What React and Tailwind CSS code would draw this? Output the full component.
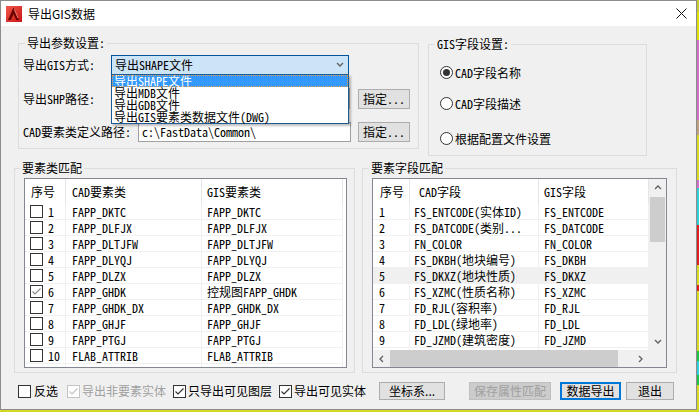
import React from "react";

const SONG = "font-['Noto_Sans_Mono_CJK_SC','Liberation_Mono','Noto_Sans_CJK_SC',monospace]";
const HEI = "font-['Noto_Sans_CJK_SC','Liberation_Sans',sans-serif]";

function Check({ checked, disabled, gray }) {
  const stroke = disabled ? "#c4c4c4" : gray ? "#8c8c8c" : "#333333";
  return (
    <span
      className={`w-[13px] h-[13px] border bg-white flex items-center justify-center shrink-0 ${
        disabled ? "border-[#c4c4c4]" : "border-[#333333]"
      }`}
    >
      {checked && (
        <svg width="11" height="11" viewBox="0 0 11 11">
          <path d="M1.5 5.5 L4 8 L9.5 2.5" fill="none" stroke={stroke} strokeWidth="1.2" />
        </svg>
      )}
    </span>
  );
}

function Radio({ checked, label }) {
  return (
    <div className="flex items-center h-[13px]">
      <span className="w-[13px] h-[13px] rounded-full border border-[#333333] bg-white flex items-center justify-center shrink-0">
        {checked && <span className="w-[7px] h-[7px] rounded-full bg-[#333333]" />}
      </span>
      <span className={`${SONG} ml-[2px] text-[12px] leading-[12px] text-black whitespace-nowrap`}>{label}</span>
    </div>
  );
}

function Btn({ children, className = "" }) {
  return (
    <div
      className={`h-[20px] border border-[#adadad] bg-[#e1e1e1] flex items-center justify-center text-[12px] leading-[12px] text-black shrink-0 ${className}`}
    >
      {children}
    </div>
  );
}

function Chevron({ dir }) {
  const d =
    dir === "up"
      ? "M1 5 L4 2 L7 5"
      : dir === "down"
      ? "M1 2 L4 5 L7 2"
      : dir === "left"
      ? "M5 1 L2 4 L5 7"
      : "M2 1 L5 4 L2 7";
  return (
    <svg width="8" height="8" viewBox="0 0 8 8">
      <path d={d} fill="none" stroke="#606060" strokeWidth="1.3" />
    </svg>
  );
}

const leftRows = [
  ["1", "FAPP_DKTC", "FAPP_DKTC"],
  ["2", "FAPP_DLFJX", "FAPP_DLFJX"],
  ["3", "FAPP_DLTJFW", "FAPP_DLTJFW"],
  ["4", "FAPP_DLYQJ", "FAPP_DLYQJ"],
  ["5", "FAPP_DLZX", "FAPP_DLZX"],
  ["6", "FAPP_GHDK", "控规图FAPP_GHDK", true],
  ["7", "FAPP_GHDK_DX", "FAPP_GHDK_DX"],
  ["8", "FAPP_GHJF", "FAPP_GHJF"],
  ["9", "FAPP_PTGJ", "FAPP_PTGJ"],
  ["10", "FLAB_ATTRIB", "FLAB_ATTRIB"],
  ["", "", ""],
];

const rightRows = [
  ["1", "FS_ENTCODE(实体ID)", "FS_ENTCODE"],
  ["2", "FS_DATCODE(类别...", "FS_DATCODE"],
  ["3", "FN_COLOR", "FN_COLOR"],
  ["4", "FS_DKBH(地块编号)", "FS_DKBH"],
  ["5", "FS_DKXZ(地块性质)", "FS_DKXZ", true],
  ["6", "FS_XZMC(性质名称)", "FS_XZMC"],
  ["7", "FD_RJL(容积率)", "FD_RJL"],
  ["8", "FD_LDL(绿地率)", "FD_LDL"],
  ["9", "FD_JZMD(建筑密度)", "FD_JZMD"],
  ["", "", ""],
];

const strip = [
  ["#c8c830", 12],
  ["#e0e000", 28],
  ["#d070c8", 80],
  ["#c0a080", 15],
  ["#d8d820", 45],
  ["#d070c8", 8],
  ["#30d0d8", 37],
  ["#e02020", 40],
  ["#d8d820", 20],
  ["#e02020", 6],
  ["#d8d820", 60],
  ["#20c040", 10],
  ["#30d0d8", 14],
  ["#20c040", 10],
  ["#d8d820", 27],
];

export default function App() {
  return (
    <div className="w-[699px] h-[412px] overflow-hidden bg-[#d8d820] flex flex-col">
      <div className="flex">
        {/* window */}
        <div className="w-[697px] h-[410px] border border-[#8c8c8c] bg-[#f0f0f0] flex flex-col shrink-0">
          {/* title bar */}
          <div className="h-[25px] bg-white flex items-center shrink-0">
            <svg className="ml-[5px]" width="16" height="16" viewBox="0 0 16 16">
              <defs>
                <linearGradient id="acad" x1="0" y1="0" x2="1" y2="1">
                  <stop offset="0" stopColor="#f25a4a" />
                  <stop offset="1" stopColor="#c81414" />
                </linearGradient>
              </defs>
              <rect width="16" height="16" fill="url(#acad)" />
              <path d="M7.5 1.5 L13 14 L10.2 14 L7.5 8 L4.8 14 L2 14 Z" fill="#6e0000" />
              <path d="M8.3 3.5 L12 12" stroke="#ff9a8a" strokeWidth="0.8" />
            </svg>
            <span className={`${HEI} ml-[6px] text-[12px] leading-[14px] text-black`}>导出GIS数据</span>
            <div className="flex-1" />
            <svg className="mr-[9px]" width="11" height="11" viewBox="0 0 11 11">
              <path d="M0.5 0.5 L10.5 10.5 M10.5 0.5 L0.5 10.5" stroke="#111" strokeWidth="1" />
            </svg>
          </div>

          {/* top section */}
          <div className="flex items-start mt-[11px]">
            <fieldset className="ml-[17px] w-[401px] h-[112px] border border-[#dcdcdc] shrink-0">
              <legend className={`${SONG} ml-[6px] px-[2px] text-[12px] leading-[12px] text-black`}>导出参数设置:</legend>
              <div className="flex flex-col pl-[4px]">
                <div className="flex items-center h-[20px] mt-[6px]">
                  <span className={`${SONG} w-[88px] text-[12px] leading-[12px]`}>导出GIS方式:</span>
                  <div className="relative w-[238px] h-[20px]">
                    <div className="w-full h-full bg-[#cce4f7] border border-[#005499] flex items-center pl-[3px] pr-[4px]">
                      <span className={`${SONG} flex-1 text-[12px] leading-[12px]`}>导出SHAPE文件</span>
                      <Chevron dir="down" />
                    </div>
                    <div className="absolute left-0 top-[19px] w-[238px] h-[50px] z-10 bg-white border border-[#1e5a96] shadow-[2px_2px_2px_rgba(0,0,0,0.25)] flex flex-col">
                      <div className={`${SONG} h-[12px] shrink-0 bg-[#3399ff] outline outline-1 outline-dotted outline-[#e8a050] -outline-offset-1 text-white text-[12px] leading-[12px] pl-[2px] whitespace-nowrap`}>
                        导出SHAPE文件
                      </div>
                      <div className={`${SONG} h-[12px] shrink-0 text-black text-[12px] leading-[12px] pl-[2px] whitespace-nowrap`}>导出MDB文件</div>
                      <div className={`${SONG} h-[12px] shrink-0 text-black text-[12px] leading-[12px] pl-[2px] whitespace-nowrap`}>导出GDB文件</div>
                      <div className={`${SONG} h-[12px] shrink-0 text-black text-[12px] leading-[12px] pl-[2px] whitespace-nowrap`}>
                        导出GIS要素类数据文件(DWG)
                      </div>
                    </div>
                  </div>
                </div>
                <div className="flex items-center h-[21px] mt-[13px]">
                  <span className={`${SONG} w-[117px] text-[12px] leading-[12px]`}>导出SHP路径:</span>
                  <div className="w-[210px] h-[21px] border border-[#a0a0a0] bg-white" />
                  <Btn className={`${SONG} ml-[8px] w-[52px]`}>指定...</Btn>
                </div>
                <div className="flex items-center h-[20px] mt-[13px]">
                  <span className={`${SONG} w-[115px] text-[12px] leading-[12px] whitespace-nowrap`}>CAD要素类定义路径:</span>
                  <div className={`${SONG} w-[213px] h-[20px] border border-[#a0a0a0] bg-white flex items-center pl-[3px] text-[12px] leading-[12px]`}>
                    c:\FastData\Common\
                  </div>
                  <Btn className={`${SONG} ml-[7px] w-[52px]`}>指定...</Btn>
                </div>
              </div>
            </fieldset>

            <fieldset className="ml-[9px] mt-[1px] w-[219px] h-[118px] border border-[#dcdcdc] shrink-0">
              <legend className={`${SONG} ml-[6px] px-[2px] text-[12px] leading-[12px] text-black`}>GIS字段设置:</legend>
              <div className="flex flex-col pl-[11px]">
                <div className="mt-[16px]">
                  <Radio checked label="CAD字段名称" />
                </div>
                <div className="mt-[18px]">
                  <Radio label="CAD字段描述" />
                </div>
                <div className="mt-[22px]">
                  <Radio label="根据配置文件设置" />
                </div>
              </div>
            </fieldset>
          </div>

          {/* lower section */}
          <div className="flex items-start mt-[6px]">
            <fieldset className="ml-[13px] w-[341px] h-[211px] border border-[#dcdcdc] shrink-0">
              <legend className={`${HEI} ml-[5px] px-[2px] text-[12px] leading-[12px] text-black`}>要素类匹配</legend>
              <div className="ml-[9px] mt-[4px] w-[323px] h-[190px] border border-[#828790] bg-white overflow-hidden flex flex-col">
                <div className="h-[25px] flex shrink-0">
                  <div className={`${HEI} w-[41px] border-r border-[#e5e5e5] flex items-center pl-[6px] text-[12px]`}>序号</div>
                  <div className={`${SONG} w-[136px] border-r border-[#e5e5e5] flex items-center pl-[6px] text-[12px]`}>CAD要素类</div>
                  <div className={`${SONG} w-[141px] border-r border-[#e5e5e5] flex items-center pl-[5px] text-[12px]`}>GIS要素类</div>
                </div>
                {leftRows.map((r, i) => (
                  <div key={i} className="h-[16px] flex shrink-0">
                    <div className="w-[41px] h-full border-r border-b border-[#f0f0f0] flex items-center pl-[5px]">
                      {r[0] && <Check checked={r[3]} gray />}
                      <span className={`${SONG} ml-[5px] text-[12px] leading-[12px]`}>{r[0]}</span>
                    </div>
                    <div className={`${SONG} w-[136px] h-full border-r border-b border-[#f0f0f0] flex items-center pl-[6px] text-[12px] leading-[12px] whitespace-nowrap`}>
                      {r[1]}
                    </div>
                    <div className={`${SONG} w-[141px] h-full border-r border-b border-[#f0f0f0] flex items-center pl-[5px] text-[12px] leading-[12px] whitespace-nowrap`}>
                      {r[2]}
                    </div>
                  </div>
                ))}
              </div>
            </fieldset>

            <fieldset className="ml-[7px] w-[315px] h-[211px] border border-[#dcdcdc] shrink-0">
              <legend className={`${HEI} ml-[6px] px-[2px] text-[12px] leading-[12px] text-black`}>要素字段匹配</legend>
              <div className="ml-[9px] mt-[4px] w-[295px] h-[190px] border border-[#828790] bg-white overflow-hidden flex">
                <div className="w-[276px] flex flex-col">
                  <div className="h-[25px] flex shrink-0">
                    <div className={`${HEI} w-[37px] border-r border-[#e5e5e5] flex items-center pl-[7px] text-[12px]`}>序号</div>
                    <div className={`${SONG} w-[129px] border-r border-[#e5e5e5] flex items-center pl-[9px] text-[12px]`}>CAD字段</div>
                    <div className={`${SONG} w-[110px] border-r border-[#e5e5e5] flex items-center pl-[5px] text-[12px]`}>GIS字段</div>
                  </div>
                  <div className="h-[146px] overflow-hidden flex flex-col">
                    {rightRows.map((r, i) => (
                      <div key={i} className={`h-[16px] flex shrink-0 ${r[3] ? "bg-[#f0f0f0]" : ""}`}>
                        <div className={`${SONG} w-[37px] h-full border-r border-b border-[#f0f0f0] flex items-center pl-[6px] text-[12px] leading-[12px]`}>
                          {r[0]}
                        </div>
                        <div className={`${SONG} w-[129px] h-full border-r border-b border-[#f0f0f0] flex items-center pl-[4px] text-[12px] leading-[12px] whitespace-nowrap overflow-hidden`}>
                          {r[1]}
                        </div>
                        <div className={`${SONG} w-[110px] h-full border-r border-b border-[#f0f0f0] flex items-center pl-[5px] text-[12px] leading-[12px] whitespace-nowrap`}>
                          {r[2]}
                        </div>
                      </div>
                    ))}
                  </div>
                  <div className="h-[17px] bg-[#f0f0f0] flex items-center shrink-0">
                    <div className="w-[17px] h-full flex items-center justify-center">
                      <Chevron dir="left" />
                    </div>
                    <div className="w-[228px] h-full bg-[#cdcdcd]" />
                    <div className="flex-1" />
                    <div className="w-[17px] h-full flex items-center justify-center">
                      <Chevron dir="right" />
                    </div>
                  </div>
                </div>
                <div className="w-[17px] flex flex-col bg-[#f0f0f0]">
                  <div className="h-[18px] flex items-center justify-center">
                    <Chevron dir="up" />
                  </div>
                  <div className="h-[45px] mx-[1px] bg-[#cdcdcd]" />
                  <div className="flex-1" />
                  <div className="h-[17px] flex items-center justify-center">
                    <Chevron dir="down" />
                  </div>
                  <div className="h-[17px] bg-[#f0f0f0]" />
                </div>
              </div>
            </fieldset>
          </div>

          {/* bottom row */}
          <div className={`${HEI} flex items-center h-[18px] mt-[9px] text-[12px] leading-[12px]`}>
            <div className="ml-[17px] flex items-center">
              <Check />
              <span className="ml-[3px] text-black">反选</span>
            </div>
            <div className="ml-[9px] flex items-center">
              <Check checked disabled />
              <span className="ml-[2px] text-[#a0a0a0]">导出非要素实体</span>
            </div>
            <div className="ml-[7px] flex items-center">
              <Check checked />
              <span className="ml-[2px] text-black">只导出可见图层</span>
            </div>
            <div className="ml-[7px] flex items-center">
              <Check checked />
              <span className="ml-[2px] text-black">导出可见实体</span>
            </div>
            <Btn className="ml-[13px] w-[66px] !h-[18px]">坐标系...</Btn>
            <div className="ml-[24px] w-[82px] h-[18px] border border-[#bfbfbf] bg-[#cccccc] flex items-center justify-center text-[#a0a0a0]">
              保存属性匹配
            </div>
            <div className="ml-[9px] w-[61px] h-[18px] border-2 border-[#0078d7] bg-[#e1e1e1] flex items-center justify-center text-black">
              数据导出
            </div>
            <Btn className="ml-[5px] w-[48px] !h-[18px]">退出</Btn>
          </div>
        </div>
        {/* desktop strip */}
        <div className="w-[2px] flex flex-col">
          {strip.map(([c, h], i) => (
            <div key={i} style={{ backgroundColor: c, height: h }} />
          ))}
        </div>
      </div>
      <div className="h-[2px] flex">
        <div className="w-[40px] bg-[#e02020]" />
        <div className="w-[30px] bg-[#d070c8]" />
        <div className="flex-1 bg-[#d8d820]" />
      </div>
    </div>
  );
}
